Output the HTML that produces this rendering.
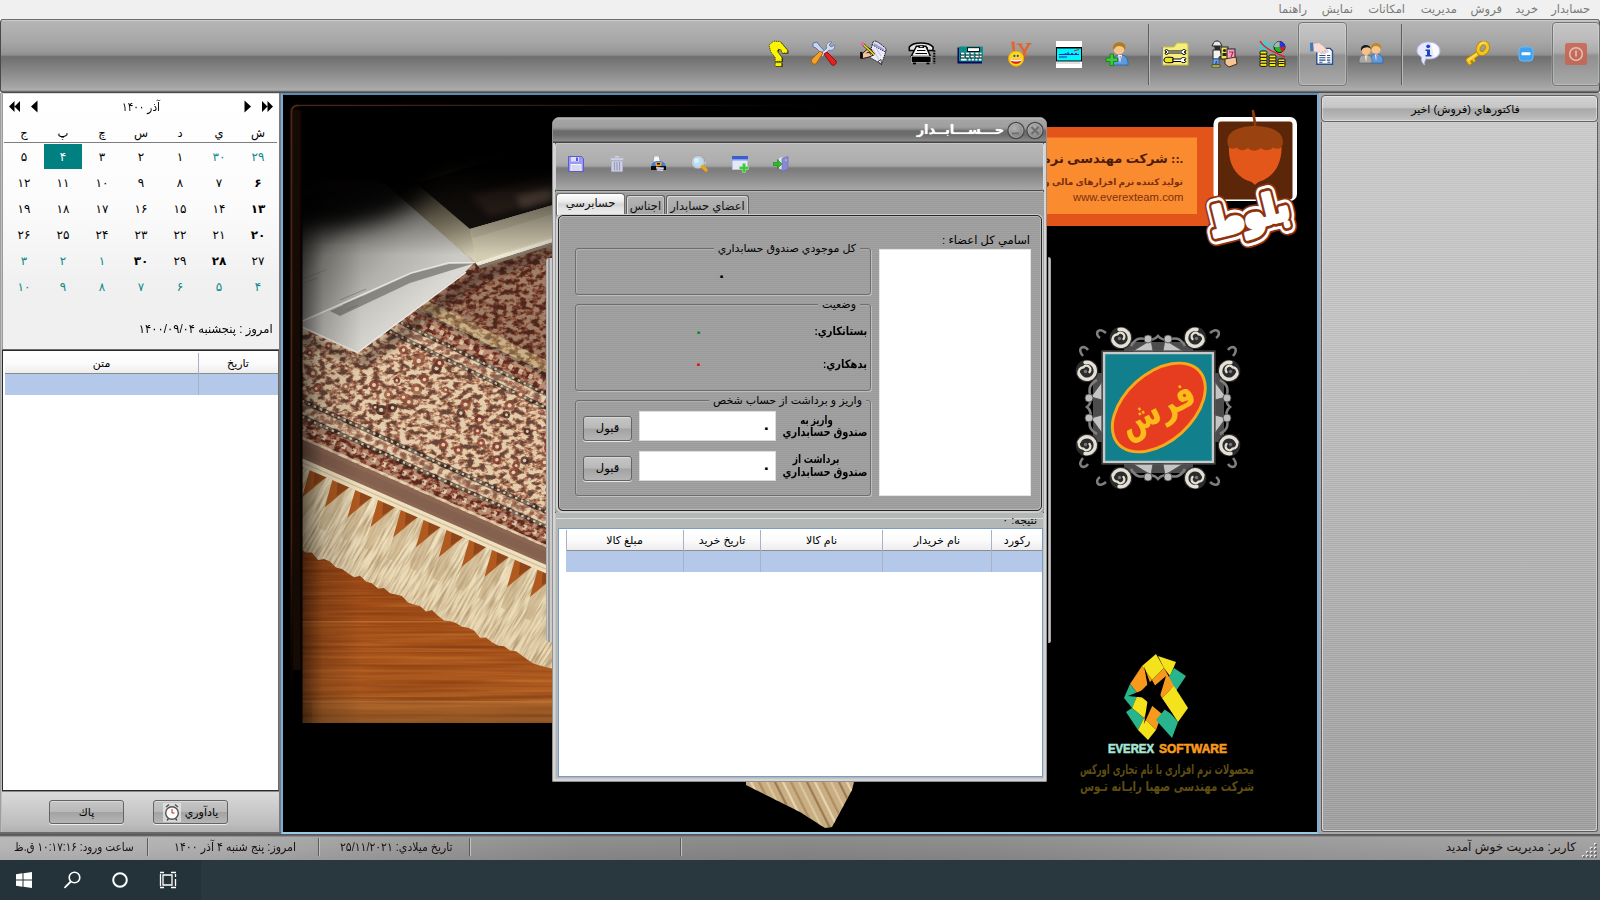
<!DOCTYPE html>
<html lang="fa">
<head>
<meta charset="utf-8">
<title>حسابدار</title>
<style>
html,body{margin:0;padding:0}
html{overflow:hidden;background:#29383f}
body{width:1600px;height:900px;position:relative;overflow:hidden;background:#f0f0f0;
 font-family:"Liberation Sans","DejaVu Sans",sans-serif;font-size:11px;color:#000;direction:rtl}
.a{position:absolute}
.t{position:absolute;white-space:nowrap;line-height:14px;height:14px}
/* menu */
#menu{left:0;top:0;width:1600px;height:19px;background:#f0f0f0}
#menu .t{color:#7b7b7b;font-size:11.5px;top:2px}
/* toolbar */
#tb{left:0;top:19px;width:1600px;height:74px;
 background:linear-gradient(to bottom,#6e6e6e 0,#6e6e6e 1px,#d6d6d6 1px,#bcbcbc 2px,#b4b4b4 3px,#b0b0b0 10px,#a7a7a7 22px,#989898 33px,#8e8e8e 36px,#737373 37.5px,#707070 39px,#7d7d7d 46px,#8d8d8d 55px,#9f9f9f 65px,#adadad 71px,#8c8c8c 72px,#4c4c4c 73px,#4c4c4c 74px);box-shadow:inset 1px 0 0 #4a4a4a, inset -1px 0 0 #4a4a4a;border-radius:4px}
.sep{position:absolute;top:5px;width:1px;height:61px;background:#5d5d5d;box-shadow:1px 0 0 #b9b9b9}
.tbtn{position:absolute;border:1px solid #767676;border-radius:4px;box-shadow:inset 0 0 0 1px rgba(255,255,255,.22), 0 0 0 1px rgba(255,255,255,.12);
 background:linear-gradient(to bottom,#c6c6c6 0,#bcbcbc 25%,#acacac 47%,#909090 53%,#989898 70%,#a9a9a9 100%)}
.ic{position:absolute}
/* left panel */
#left{left:0;top:93px;width:281px;height:741px;background:#6a6a6a}
#cal{left:2px;top:0;width:277px;height:256px;background:linear-gradient(to bottom,#ffffff 0,#fbfbfb 45%,#f0f0f0 75%,#f0f0f0 100%);border-left:1px solid #9c9c9c;border-top:1px solid #dcdcdc;box-sizing:border-box}
.d{position:absolute;width:39px;height:26px;line-height:26px;text-align:center;font-size:12px;direction:rtl}
.h{position:absolute;width:39px;height:16px;line-height:16px;text-align:center;font-size:11.5px}
.g{color:#0c8a8a}
.b{font-weight:bold}
/* grids */
.grid{position:absolute;background:#fff;box-sizing:border-box}
.gh{position:absolute;background:linear-gradient(to bottom,#ffffff 0,#fbfbfb 50%,#ededed 100%);border-bottom:1px solid #8c8c8c;box-sizing:border-box}
.gh .t{font-size:11px}
.sel{position:absolute;background:#b4c8ea}
.vl{position:absolute;width:1px;background:#a9b2c2}
.btn{position:absolute;box-sizing:border-box;border:1px solid #646464;border-radius:3px;text-align:center;font-size:11px;
 background:linear-gradient(to bottom,#c6c6c6 0,#b9b9b9 48%,#a3a3a3 52%,#b5b5b5 100%);box-shadow:inset 0 1px 0 rgba(255,255,255,.35), 0 1px 0 rgba(255,255,255,.75)}
/* status */
#status{left:0;top:834px;width:1600px;height:26px;background:linear-gradient(to bottom,#555 0,#5a5a5a 1px,#707070 2px,rgba(255,255,255,.05) 3px,rgba(0,0,0,0) 12px,rgba(0,0,0,.06) 26px),linear-gradient(to right,#b6b6b6 0,#b0b0b0 12%,#9c9c9c 24%,#8b8b8b 36%,#878787 50%,#8b8b8b 62%,#989898 78%,#a2a2a2 100%)}
#status .t{font-size:12px;top:6px;color:#1a1010}
#status .sp{position:absolute;top:4px;width:1px;height:18px;background:#5c5c5c;box-shadow:1px 0 0 #c0c0c0}
#task{left:0;top:860px;width:1600px;height:40px;background:#29383f}
/* right panel */
#right{left:1319px;top:93px;width:281px;height:741px;background:#a8a8a8}
/* mdi */
#mdi{left:281px;top:93px;width:1038px;height:741px;background:#000;box-sizing:border-box;border:2px solid #79addb;border-top-color:#5d8cb5;border-bottom-color:#9ccbea}
/* dialog */
#dlg{left:552px;top:117px;width:495px;height:665px;box-sizing:border-box}
.stripe{background-image:repeating-linear-gradient(to bottom,#a3a3a3 0,#a3a3a3 1px,#9a9a9a 1px,#9a9a9a 2px)}
.gb{position:absolute;box-sizing:border-box;border:1px solid #6e6e6e;border-radius:3px;box-shadow:1px 1px 0 rgba(255,255,255,.35), inset 1px 1px 0 rgba(255,255,255,.2)}
.gbl{position:absolute;white-space:nowrap;font-size:11px;line-height:13px;padding:0 4px}
</style>
</head>
<body>
<!--MENU-->
<div id="menu" class="a">
<span class="t" style="right:10px">حسابدار</span>
<span class="t" style="right:62px">خريد</span>
<span class="t" style="right:98px">فروش</span>
<span class="t" style="right:143px">مديريت</span>
<span class="t" style="right:195px">امكانات</span>
<span class="t" style="right:247px">نمايش</span>
<span class="t" style="right:293px">راهنما</span>
</div>
<!--TOOLBAR-->
<div id="tb" class="a">
<!--TBICONS-S-->
<div class="sep" style="left:1148px"></div>
<div class="sep" style="left:1401px"></div>
<div class="tbtn" style="left:1298px;top:3px;width:47px;height:62px"></div>
<div class="tbtn" style="left:1552px;top:3px;width:46px;height:62px"></div>
<!-- 1 question -->
<svg class="ic" style="left:768px;top:21px" width="22" height="28" viewBox="0 0 22 28">
<path d="M1 5.100 L5.500 1.200 L12.200 1.500 L19.600 10.200 L19.600 13 L13.400 13 L13.400 10.200 L10.600 9.100 L9.400 11.300 L13.900 17.500 L13.900 21.400 L7.200 21.400 L7.200 17.500 L2.700 11.900 Z M7.200 22.600 L13.700 22.600 L13.700 26.500 L7.200 26.500 Z" fill="#1a1a00" transform="translate(.8 .6)"/>
<path d="M1 5.100 L5.500 1.200 L12.200 1.500 L19.600 10.200 L19.600 13 L13.400 13 L13.400 10.200 L10.600 9.100 L9.400 11.300 L13.900 17.500 L13.900 21.400 L7.200 21.400 L7.200 17.500 L2.700 11.900 Z M7.200 22.600 L13.700 22.600 L13.700 26.500 L7.200 26.500 Z" fill="#fbf404" stroke="#2a2a00" stroke-width=".7" stroke-dasharray="1.400 .7"/>
</svg>
<!-- 2 tools -->
<svg class="ic" style="left:810px;top:22px" width="28" height="26" viewBox="0 0 28 26">
<path d="M3 2 L7 1 L9 4 L17 13 L14 15 L6 7 L3 6 Z" fill="#c9d6ee" stroke="#5b73a8" stroke-width="1"/>
<path d="M25 4 C25 9 21 10 19 9 L12 16 L10 13 L17 7 C15 4 18 0 22 1 L19 4 L21 6 Z" fill="#d5dcef" stroke="#6a7fb0" stroke-width="1"/>
<path d="M14 13 L17 11 L26 20 C27 23 24 25 22 24 Z" fill="#e32222" stroke="#8e1010" stroke-width="1"/>
<path d="M13 12 L10 10 L2 18 C0 21 3 24 6 23 Z" fill="#f0a22a" stroke="#a85c0a" stroke-width="1"/>
</svg>
<!-- 3 hand writing -->
<svg class="ic" style="left:859px;top:21px" width="28" height="27" viewBox="0 0 28 27">
<path d="M13.500 3.400 L27 11.300 L22.500 24.200 L10.100 16.900 Z" fill="#ececfa" stroke="#1a1a1a" stroke-width="1" stroke-dasharray="1.600 .8"/>
<path d="M14 2 C15.500 0 18 0.500 27.200 8.800 L26.500 12 L13.300 4.800 Z" fill="#dcdcf6" stroke="#1a1a1a" stroke-width="1" stroke-dasharray="1.600 .8"/>
<path d="M15 4 L25 10" stroke="#9a9adc" stroke-width="1.600"/>
<path d="M19 21.500 L22.500 24.600 L22 19.500 Z" fill="#f8f8ff" stroke="#1a1a1a" stroke-width=".8"/>
<path d="M14 9 L20 20 M17 8 L22 16" stroke="#c6c6ee" stroke-width="1.200"/>
<path d="M3.400 13.600 L9.600 8 L12.500 9.500 L14.800 15 L10 17 L3.400 18.600 Z" fill="#f4c49c" stroke="#1a1a1a" stroke-width="1"/>
<rect x="1.100" y="11.900" width="2.400" height="6.800" fill="#0a0a0a"/>
<path d="M3.500 3.800 L15.200 14.700" stroke="#3a3000" stroke-width="2.600"/>
<path d="M3.500 3.800 L15.200 14.700" stroke="#f4e21a" stroke-width="1.500"/>
<circle cx="3.400" cy="3.700" r="1.700" fill="#f060c0"/>
<path d="M7.500 13 L10.500 12 L11.500 14.500" stroke="#1a1a1a" stroke-width="1" fill="none"/>
</svg>
<!-- 4 phone -->
<svg class="ic" style="left:908px;top:23px" width="28" height="24" viewBox="0 0 28 24">
<path d="M1.300 8.500 L1.300 5 C5 -0.500 21 -0.500 25 5 L25 8.500 L19 8.500 L19 5.800 L8 5.800 L8 8.500 Z" fill="#e4e4e4" stroke="#000" stroke-width="1.500"/>
<path d="M8.400 4.200 L17.900 4.200 L22.400 14.400 L3.300 14.400 Z" fill="#f6f6f6" stroke="#000" stroke-width="1.400"/>
<path d="M9 8.500 L17.500 8.500 M7.500 11.500 L19 11.500" stroke="#000" stroke-width="1"/>
<rect x="10.500" y="3.400" width="5.500" height="2.600" fill="#000"/><rect x="11.800" y="4.200" width="2.800" height="1" fill="#fff"/>
<rect x="3.300" y="14.400" width="19.700" height="6.200" fill="#000" stroke="#fff" stroke-width=".5"/>
<rect x="5" y="20.600" width="3" height="1.700" fill="#000"/><rect x="18.500" y="20.600" width="3" height="1.700" fill="#000"/>
<path d="M26.300 8.200 L26.300 21.700" stroke="#000" stroke-width="2" stroke-dasharray="1.600 1"/>
</svg>
<!-- 5 calculator -->
<svg class="ic" style="left:957px;top:26px" width="27" height="19" viewBox="0 0 27 19">
<rect x="0.500" y="2.500" width="24.500" height="16" fill="#06065e"/>
<rect x="2" y="1.500" width="24" height="15" rx="1" fill="#0d8c8c"/>
<rect x="10.500" y="2.700" width="12" height="3.800" fill="#fff" stroke="#000" stroke-width=".9"/>
<g fill="#000"><rect x="3.500" y="8.300" width="3.600" height="2.200"/><rect x="8.300" y="8.300" width="3.600" height="2.200"/><rect x="13.100" y="8.300" width="3.600" height="2.200"/><rect x="17.900" y="8.300" width="3.600" height="2.200"/><rect x="22.300" y="8.300" width="2.400" height="2.200"/>
<rect x="3.500" y="11.300" width="3.600" height="2.200"/><rect x="8.300" y="11.300" width="3.600" height="2.200"/><rect x="13.100" y="11.300" width="3.600" height="2.200"/><rect x="17.900" y="11.300" width="3.600" height="2.200"/><rect x="22.300" y="11.300" width="2.400" height="2.200"/></g>
<g fill="#fff"><rect x="4" y="7.700" width="3.200" height="1.800"/><rect x="8.800" y="7.700" width="3.200" height="1.800"/><rect x="13.600" y="7.700" width="3.200" height="1.800"/><rect x="18.400" y="7.700" width="3.200" height="1.800"/><rect x="22.600" y="7.700" width="2" height="1.800"/>
<rect x="4" y="10.700" width="3.200" height="1.800"/><rect x="8.800" y="10.700" width="3.200" height="1.800"/><rect x="13.600" y="10.700" width="3.200" height="1.800"/><rect x="18.400" y="10.700" width="3.200" height="1.800"/><rect x="22.600" y="10.700" width="2" height="1.800"/>
<rect x="4" y="13.700" width="5.600" height="1.800"/><rect x="11.500" y="13.700" width="2" height="1.800"/><rect x="14.800" y="13.700" width="2" height="1.800"/><rect x="18.400" y="13.700" width="2" height="1.800"/><rect x="22" y="13.700" width="2.400" height="1.800"/></g>
</svg>
<!-- 6 yahoo -->
<svg class="ic" style="left:1006px;top:21px" width="28" height="28" viewBox="0 0 28 28">
<path d="M5.300 1.700 L8.500 1.700 L9 11.500 L6.800 11.500 Z" fill="#e8602a"/>
<path d="M10.500 3.500 L16.500 3.500 L16.500 4.700 L15.300 4.700 L18.300 9.500 L21.600 4.200 L20 4.200 L20 3 L25.600 3 L25.600 4.200 L24.300 4.200 L19.800 11.200 L19.800 15 L21.500 15 L21.500 16.500 L15.200 16.500 L15.200 15 L17 15 L17 11.500 L12.500 4.700 L10.500 4.700 Z" fill="#e8602a"/>
<circle cx="10.100" cy="18.600" r="7.600" fill="#fcd818" stroke="#e8a808" stroke-width="1"/>
<circle cx="8.400" cy="15.900" r="1.100" fill="#1c4ae0"/><circle cx="11.800" cy="15.900" r="1.100" fill="#1c4ae0"/>
<path d="M4.200 18.700 C7 20 13.500 20 16 18.700 C15.500 25.500 4.700 25.500 4.200 18.700 Z" fill="#e31b12"/>
<path d="M4.200 18.700 C7 20 13.500 20 16 18.700 L15.600 20.800 C13 21.800 7 21.800 4.600 20.800 Z" fill="#fff"/>
</svg>
<!-- 7 cyan screen -->
<svg class="ic" style="left:1056px;top:22px" width="26" height="27" viewBox="0 0 26 27">
<rect x="0" y="0" width="26" height="27" fill="#fff"/>
<rect x="0" y="6" width="26" height="14.500" fill="#000"/>
<rect x="1" y="7.500" width="24" height="12" fill="#00f6ff"/>
<path d="M3 13.500 L23 13.500 M3 16 L11 16" stroke="#0b2a9a" stroke-width="1.200"/>
<path d="M9 12 L10 14 L12 11.500 L14 14 L16 12 L18 14 L20 12 L22 14" stroke="#1030c0" stroke-width="1" fill="none"/>
<path d="M18 10 L23 8.500" stroke="#e81818" stroke-width="1"/>
<rect x="0" y="21.500" width="24" height="1" fill="#c0c0c0"/>
</svg>
<!-- 8 user add -->
<svg class="ic" style="left:1105px;top:22px" width="25" height="25" viewBox="0 0 25 25">
<path d="M8 24 C8 15 12 14 15 14 C20 14 23 16 23 24 Z" fill="#5b9be0" stroke="#2a62b0" stroke-width=".8"/>
<path d="M13 14 L15 22 L17 14 Z" fill="#fff"/><path d="M14.600 15 L15 21 L15.600 15Z" fill="#e03030"/>
<circle cx="14" cy="8" r="5.500" fill="#f7c48e"/>
<path d="M8 8 C7 1 17 -1 20 4 C21 6 20 9 19.500 9 C19 6 17 5 14 5 C11 5 10 7 8.500 9Z" fill="#b07a1e"/>
<path d="M1 17 L5 17 L5 13 L8.500 13 L8.500 17 L12.500 17 L12.500 20.500 L8.500 20.500 L8.500 24.500 L5 24.500 L5 20.500 L1 20.500 Z" fill="#3fc83a" stroke="#14861a" stroke-width=".9"/>
</svg>
<!-- 9 folder tools -->
<svg class="ic" style="left:1161px;top:23px" width="28" height="24" viewBox="0 0 28 24">
<path d="M1 5 L13 5 L16 1 L26 1 L27 3 L27 23 L1 23 Z" fill="#f4ee7e" stroke="#c9c040" stroke-width="1"/>
<rect x="0.500" y="5" width="1.200" height="18" fill="#6a6ad0"/>
<path d="M4 9 C4 7 7 7 7 9 L21 9 C21 7 25 7 25 9 L23 10 L25 11 C25 13 21 13 21 11 L7 11 C7 13 4 13 4 11 L6 10 Z" fill="#fff" stroke="#000" stroke-width="1"/>
<path d="M3 18 C3 15 6 15 12 15.500 L12 20.500 C6 21 3 21 3 18 Z" fill="#f2e41a" stroke="#000" stroke-width="1"/>
<path d="M12 17 L20 17 C20 15 25 15 25 17 L23 18 L25 19.500 C25 21 20 21 20 19.500 L12 19.500Z" fill="#fff" stroke="#000" stroke-width="1"/>
</svg>
<!-- 10 worker -->
<svg class="ic" style="left:1210px;top:21px" width="28" height="28" viewBox="0 0 28 28">
<path d="M3 4 C4 0 10 0 11 4 L12 6 L2 6Z" fill="#e8e8e8" stroke="#222" stroke-width="1"/>
<path d="M4 6 L10 6 L10 10 L5 10Z" fill="#2a2a2a"/>
<path d="M3 10 L10 10 L12 16 L9 17 L9 19 L3 19 Z" fill="#f2f2f2" stroke="#222" stroke-width="1"/>
<path d="M3 19 L9 19 L9 25 L7 25 L6.500 21 L5 25 L3 25Z" fill="#6aa2e6" stroke="#2a4a8a" stroke-width=".8"/>
<rect x="2" y="25" width="8" height="2" fill="#f2e41a" stroke="#222" stroke-width=".6"/>
<rect x="11" y="7" width="7" height="12" fill="#f6e24a" stroke="#222" stroke-width="1"/>
<circle cx="14.500" cy="10.500" r="1.600" fill="#222"/><rect x="12.500" y="13" width="4" height="3" fill="#222"/>
<rect x="17" y="9" width="8" height="12" fill="#f4a6c6" stroke="#222" stroke-width="1"/>
<path d="M19 12 L23 12 L21 17" stroke="#c01a6a" stroke-width="1.200" fill="none"/>
<path d="M15 19 L26 17 L27 24 L19 27 L15 24Z" fill="#f2c69a" stroke="#4a2a10" stroke-width="1"/>
</svg>
<!-- 11 coins chart -->
<svg class="ic" style="left:1259px;top:21px" width="28" height="27" viewBox="0 0 28 27">
<path d="M2 1 L2 12 M2 4 L16 4 M6 1 L6 12 M2 8 L16 8" stroke="#00e8f0" stroke-width="1.200" fill="none"/>
<path d="M1 1 C5 8 14 12 26 17" stroke="#f01818" stroke-width="1.400" fill="none"/>
<circle cx="20.500" cy="7" r="5.500" fill="#18b828" stroke="#111" stroke-width="1"/>
<path d="M20.500 7 L20.500 1.500 A5.500 5.500 0 0 1 26 7 Z" fill="#2038e8"/>
<path d="M20.500 7 L26 7 A5.500 5.500 0 0 1 23 12 Z" fill="#e01818"/>
<path d="M20.500 7 L20.500 1.500 A5.500 5.500 0 0 0 15 7 Z" fill="#b0b0b0"/>
<g fill="#f4e61a" stroke="#111" stroke-width="1">
<rect x="1" y="11" width="7" height="3.200" rx="1.200"/><rect x="1" y="14.200" width="7" height="3.200" rx="1.200"/><rect x="1" y="17.400" width="7" height="3.200" rx="1.200"/><rect x="1" y="20.600" width="7" height="3.200" rx="1.200"/><rect x="1" y="23.200" width="7" height="3.200" rx="1.200"/>
<rect x="10" y="15" width="7" height="3.200" rx="1.200"/><rect x="10" y="18" width="7" height="3.200" rx="1.200"/><rect x="10" y="21" width="7" height="3.200" rx="1.200"/><rect x="10" y="23.500" width="7" height="3.200" rx="1.200"/>
<rect x="19" y="19" width="7" height="3.200" rx="1.200"/><rect x="19" y="21.500" width="7" height="3.200" rx="1.200"/><rect x="19" y="23.500" width="7" height="3.200" rx="1.200"/>
</g>
</svg>
<!-- 12 hand + doc -->
<svg class="ic" style="left:1309px;top:22px" width="25" height="25" viewBox="0 0 25 25">
<path d="M7.800 7.400 L21 7.400 L23.500 9.800 L23.500 23.200 L7.800 23.200 Z" fill="#fbfcfe" stroke="#2a5090" stroke-width="1.400"/>
<path d="M10.300 14.500 L16.500 14.500 M18 14.500 L21.300 14.500 M10.300 16.800 L16.500 16.800 M18 16.800 L21.300 16.800 M10.300 19.100 L16.500 19.100 M18 19.100 L21.300 19.100 M10.300 21.300 L13.500 21.300 M18.500 21.300 L21.300 21.300" stroke="#2a4a88" stroke-width="1.100"/>
<path d="M4 2.500 L10 1.700 L14.500 5 L19.500 10.500 L18.300 11.500 L15.500 9 L17 12 L15.500 12.500 L13.300 10 L14 12.800 L12.300 13 L10.500 10.300 L8.500 11.300 L4.500 10.500 Z" fill="#f8dcd6" stroke="#c9a0a0" stroke-width=".6"/>
<path d="M1 1.800 L4 1.500 L4.500 10.300 L1.300 10.500Z" fill="#3a7ab8"/>
</svg>
<!-- 13 two users -->
<svg class="ic" style="left:1358px;top:23px" width="26" height="22" viewBox="0 0 26 22">
<path d="M12 21 C12 14 14 12 18 12 C23 12 25 14 25 21 Z" fill="#5b9be0" stroke="#2a62b0" stroke-width=".7"/>
<path d="M17 12.500 L18 19 L19.500 12.500Z" fill="#fff"/><path d="M18 13 L18.200 18 L18.800 13Z" fill="#e03030"/>
<circle cx="18" cy="7" r="4.800" fill="#f7c48e"/>
<path d="M13 7 C12 0 22 -1 23.500 5 C23.500 7 23 8 23 8 C22 5 20 4 18 4 C15 4 14 6 13.500 8Z" fill="#c08a28"/>
<path d="M1 21 C1 14 3 13 8 13 C13 13 14 15 14 21 Z" fill="#a8a8a8" stroke="#6a6a6a" stroke-width=".7"/>
<path d="M7 13.500 L8 20 L9.500 13.500Z" fill="#fff"/><path d="M8 14 L8.200 19 L8.800 14Z" fill="#f0c020"/>
<circle cx="8" cy="8.500" r="4.600" fill="#f7c08a"/>
<path d="M3 8 C2 2 12 1 13 7 C12 6 10 5 8 5.500 C6 5.500 4 6.500 3.500 9Z" fill="#1a1a1a"/>
</svg>
<!-- 14 info bubble -->
<svg class="ic" style="left:1416px;top:22px" width="25" height="25" viewBox="0 0 25 25">
<path d="M12.500 1 C20 1 24 5 24 10 C24 15 19 18 13 18 C12 18 11 18 10 17.800 C9 20 8 22 8.500 24 C6 22 5 19 5.500 16 C2 14 1 12 1 10 C1 5 5 1 12.500 1Z" fill="#e8e8fb" stroke="#b6b6e6" stroke-width="1"/>
<path d="M15 2 C20 3 23 6 23 10 C23 13 21 15 18 16.500 C17 10 16 6 15 2Z" fill="#fafaff"/>
<circle cx="12.200" cy="5.300" r="1.900" fill="#1a44c0"/>
<path d="M9.500 8.500 L14 8.500 L14 14 L15.500 14 L15.500 15.500 L9.500 15.500 L9.500 14 L11 14 L11 10 L9.500 10Z" fill="#1a44c0"/>
</svg>
<!-- 15 key -->
<svg class="ic" style="left:1465px;top:22px" width="25" height="25" viewBox="0 0 25 25">
<path d="M13.500 9.500 L16.500 12.800 L9.500 17.500 L10.800 20 L8.300 21.500 L7.200 19.300 L5.800 20.200 L7 22.800 L4 24.300 L1 19.800 L1.200 17.800 Z" fill="#f4c620" stroke="#b8860a" stroke-width="1"/>
<path d="M3 19.500 L13.500 11.500" stroke="#fbe27a" stroke-width="1.200"/>
<ellipse cx="17.800" cy="7.200" rx="4.400" ry="5.600" transform="rotate(28 17.800 7.200)" fill="none" stroke="#b8860a" stroke-width="4.800"/>
<ellipse cx="17.800" cy="7.200" rx="4.400" ry="5.600" transform="rotate(28 17.800 7.200)" fill="none" stroke="#f4c620" stroke-width="3.200"/>
<path d="M14.500 4.500 C16 1.500 19 1 21 2.500" stroke="#fbe27a" stroke-width="1.200" fill="none"/>
</svg>
<!-- 16 blue minus -->
<svg class="ic" style="left:1518px;top:27px" width="16" height="16" viewBox="0 0 16 16">
<rect x="1" y="1" width="14" height="14" rx="3.500" fill="#3ea2f2" stroke="#6cbcf8" stroke-width="1"/>
<rect x="3.500" y="6.300" width="9" height="3" rx=".8" fill="#fff"/>
</svg>
<!-- 17 power -->
<svg class="ic" style="left:1565px;top:24px" width="22" height="22" viewBox="0 0 22 22">
<rect x="0" y="0" width="22" height="22" rx="2.500" fill="#c9634f" fill-opacity=".85"/>
<circle cx="11" cy="11" r="6.300" fill="none" stroke="#e6c0b8" stroke-width="1.500"/>
<rect x="10.200" y="7.500" width="1.600" height="6" fill="#e6c0b8"/>
</svg>
<!--TBICONS-E-->
</div>
<!--LEFT-->
<div id="left" class="a">
<!--CAL-S-->
<div id="cal" class="a"></div>
<svg class="a" style="left:0;top:0" width="281" height="30" viewBox="0 0 281 30"><path d="M9 13.500 L14.500 8 L14.500 19 Z M14.500 13.500 L20 8 L20 19 Z M31 13.500 L37.500 7.500 L37.500 19.500 Z M251 13.500 L244.500 7.500 L244.500 19.500 Z M273 13.500 L267.500 8 L267.500 19 Z M267.500 13.500 L262 8 L262 19 Z" fill="#000"/></svg>
<span class="t" style="left:91px;width:100px;text-align:center;top:7px;font-size:12px;transform:scaleX(.87)">آذر ۱۴۰۰</span>
<span class="h a" style="left:238.5px;top:32px">ش</span>
<span class="h a" style="left:199.5px;top:32px">ي</span>
<span class="h a" style="left:160.5px;top:32px">د</span>
<span class="h a" style="left:121.5px;top:32px">س</span>
<span class="h a" style="left:82.5px;top:32px">چ</span>
<span class="h a" style="left:43.5px;top:32px">پ</span>
<span class="h a" style="left:4.5px;top:32px">ج</span>
<div class="a" style="left:4px;top:49px;width:273px;height:1px;background:#7d7d7d"></div>
<span class="d g" style="left:238.5px;top:51px">۲۹</span>
<span class="d g" style="left:199.5px;top:51px">۳۰</span>
<span class="d" style="left:160.5px;top:51px">۱</span>
<span class="d" style="left:121.5px;top:51px">۲</span>
<span class="d" style="left:82.5px;top:51px">۳</span>
<div class="a" style="left:44px;top:51px;width:38px;height:25px;background:#008080"></div>
<span class="d" style="left:43.5px;top:51px;color:#fff">۴</span>
<span class="d" style="left:4.5px;top:51px">۵</span>
<span class="d b" style="left:238.5px;top:77px">۶</span>
<span class="d" style="left:199.5px;top:77px">۷</span>
<span class="d" style="left:160.5px;top:77px">۸</span>
<span class="d" style="left:121.5px;top:77px">۹</span>
<span class="d" style="left:82.5px;top:77px">۱۰</span>
<span class="d" style="left:43.5px;top:77px">۱۱</span>
<span class="d" style="left:4.5px;top:77px">۱۲</span>
<span class="d b" style="left:238.5px;top:103px">۱۳</span>
<span class="d" style="left:199.5px;top:103px">۱۴</span>
<span class="d" style="left:160.5px;top:103px">۱۵</span>
<span class="d" style="left:121.5px;top:103px">۱۶</span>
<span class="d" style="left:82.5px;top:103px">۱۷</span>
<span class="d" style="left:43.5px;top:103px">۱۸</span>
<span class="d" style="left:4.5px;top:103px">۱۹</span>
<span class="d b" style="left:238.5px;top:129px">۲۰</span>
<span class="d" style="left:199.5px;top:129px">۲۱</span>
<span class="d" style="left:160.5px;top:129px">۲۲</span>
<span class="d" style="left:121.5px;top:129px">۲۳</span>
<span class="d" style="left:82.5px;top:129px">۲۴</span>
<span class="d" style="left:43.5px;top:129px">۲۵</span>
<span class="d" style="left:4.5px;top:129px">۲۶</span>
<span class="d" style="left:238.5px;top:155px">۲۷</span>
<span class="d b" style="left:199.5px;top:155px">۲۸</span>
<span class="d" style="left:160.5px;top:155px">۲۹</span>
<span class="d b" style="left:121.5px;top:155px">۳۰</span>
<span class="d g" style="left:82.5px;top:155px">۱</span>
<span class="d g" style="left:43.5px;top:155px">۲</span>
<span class="d g" style="left:4.5px;top:155px">۳</span>
<span class="d g" style="left:238.5px;top:181px">۴</span>
<span class="d g" style="left:199.5px;top:181px">۵</span>
<span class="d g" style="left:160.5px;top:181px">۶</span>
<span class="d g" style="left:121.5px;top:181px">۷</span>
<span class="d g" style="left:82.5px;top:181px">۸</span>
<span class="d g" style="left:43.5px;top:181px">۹</span>
<span class="d g" style="left:4.5px;top:181px">۱۰</span>
<span class="t" style="right:8px;top:229px;font-size:12px;transform-origin:right;transform:scaleX(.965)">امروز :  پنجشنبه ۱۴۰۰/۰۹/۰۴</span>
<!--CAL-E-->
<!--REM-S-->
<div class="grid" style="left:2px;top:257px;width:277px;height:441px;border:1px solid #2a2a2a;border-right-color:#6a6a6a"></div>
<div class="gh" style="left:5px;top:260px;width:273px;height:21px"><span class="t" style="left:193px;width:80px;text-align:center;top:3px">تاريخ</span><span class="t" style="left:0;width:193px;text-align:center;top:3px">متن</span></div>
<div class="sel" style="left:5px;top:281px;width:273px;height:21px"></div>
<div class="vl" style="left:198px;top:260px;height:42px"></div>
<div class="a" style="left:0;top:698px;width:281px;height:41px;background:linear-gradient(to bottom,#dadada 0,#cfcfcf 30%,#bdbdbd 80%,#b0b0b0 100%);border-top:1px solid #8a8a8a;box-sizing:border-box"></div>
<div class="btn" style="left:49px;top:707px;width:75px;height:24px;line-height:22px">پاك</div>
<div class="btn" style="left:153px;top:707px;width:75px;height:24px;line-height:22px;padding-left:22px;text-align:center">يادآوري
<svg class="a" style="left:9px;top:2px" width="18" height="19" viewBox="0 0 18 19"><rect x="0" y="0" width="18" height="19" fill="#e9e9e9" fill-opacity=".7"/><circle cx="9" cy="10" r="6.300" fill="#fdfdfd" stroke="#555" stroke-width="1.400"/><path d="M3 4 L6 1.500 M15 4 L12 1.500 M4 17.500 L5.500 15.500 M14 17.500 L12.500 15.500" stroke="#555" stroke-width="1.500"/><path d="M9 6 L9 10 L11.500 10" stroke="#d02020" stroke-width="1" fill="none"/></svg>
</div>
<div class="a" style="left:279px;top:0;width:2px;height:739px;background:#7b7b7b"></div>
<div class="a" style="left:0;top:0;width:2px;height:739px;background:linear-gradient(to right,#8e8e8e,#cfcfcf)"></div>
<!--REM-E-->
</div>
<!--MDI-->
<div id="mdi" class="a">
<!--MDI-S-->
<svg class="a" style="left:0;top:0" width="1034" height="735" viewBox="283 95 1034 735">
<defs>
<filter id="fc" x="0" y="0" width="100%" height="100%" color-interpolation-filters="sRGB">
<feTurbulence type="fractalNoise" baseFrequency="0.15 0.2" numOctaves="3" seed="11" result="n"/>
<feColorMatrix in="n" type="matrix" values="2.8 0 0 0 -0.9  2.8 0 0 0 -0.9  2.8 0 0 0 -0.9  0 0 0 0 1"/>
<feComponentTransfer>
<feFuncR type="table" tableValues="0.24 0.50 0.70 0.86 0.89"/>
<feFuncG type="table" tableValues="0.13 0.24 0.46 0.77 0.81"/>
<feFuncB type="table" tableValues="0.10 0.17 0.34 0.63 0.68"/>
</feComponentTransfer>
</filter>
<filter id="fw" x="0" y="0" width="100%" height="100%" color-interpolation-filters="sRGB">
<feTurbulence type="fractalNoise" baseFrequency="0.008 0.3" numOctaves="2" seed="3" result="n"/>
<feColorMatrix in="n" type="matrix" values="0 0 0 0 0.86  0 0 0 0 0.55  0 0 0 0 0.25  2.2 0 0 0 -0.85" result="c"/><feComposite in="c" in2="SourceGraphic" operator="in"/>
</filter>
<filter id="fw2" x="0" y="0" width="100%" height="100%" color-interpolation-filters="sRGB">
<feTurbulence type="fractalNoise" baseFrequency="0.006 0.22" numOctaves="2" seed="9" result="n"/>
<feColorMatrix in="n" type="matrix" values="0 0 0 0 0.45  0 0 0 0 0.18  0 0 0 0 0.04  2.2 0 0 0 -0.9" result="c"/><feComposite in="c" in2="SourceGraphic" operator="in"/>
</filter>
<filter id="ffr" x="-5%" y="-5%" width="110%" height="110%" color-interpolation-filters="sRGB">
<feTurbulence type="fractalNoise" baseFrequency="0.5 0.04" numOctaves="2" seed="5" result="n"/>
<feColorMatrix in="n" type="matrix" values="0 0 0 0 0.55  0 0 0 0 0.42  0 0 0 0 0.25  2.4 0 0 0 -0.95" result="c"/>
<feComposite in="c" in2="SourceGraphic" operator="in"/>
</filter>
<filter id="bl1"><feGaussianBlur stdDeviation="0.7"/></filter>
<filter id="bl3"><feGaussianBlur stdDeviation="3"/></filter>
<filter id="bl8"><feGaussianBlur stdDeviation="10"/></filter>
<linearGradient id="gtop" x1="0" y1="0" x2="0" y2="1"><stop offset="0" stop-color="#000" stop-opacity="1"/><stop offset=".3" stop-color="#000" stop-opacity=".97"/><stop offset="1" stop-color="#000" stop-opacity="0"/></linearGradient>
<linearGradient id="gwood" x1="0" y1="540" x2="0" y2="723" gradientUnits="userSpaceOnUse"><stop offset="0" stop-color="#8f3f12"/><stop offset=".45" stop-color="#a34e18"/><stop offset=".8" stop-color="#ad591e"/><stop offset="1" stop-color="#b96a28"/></linearGradient>
<linearGradient id="gpageL" x1="315" y1="205" x2="420" y2="300" gradientUnits="userSpaceOnUse"><stop offset="0" stop-color="#363431"/><stop offset=".3" stop-color="#878580"/><stop offset=".65" stop-color="#b3b1ab"/><stop offset="1" stop-color="#cdcbc5"/></linearGradient>
<linearGradient id="gpageL2" x1="330" y1="290" x2="380" y2="345" gradientUnits="userSpaceOnUse"><stop offset="0" stop-color="#b4b2ad"/><stop offset="1" stop-color="#dcdad4"/></linearGradient>
<linearGradient id="gpageR" x1="400" y1="180" x2="470" y2="262" gradientUnits="userSpaceOnUse"><stop offset="0" stop-color="#1a1612"/><stop offset=".45" stop-color="#8a8068"/><stop offset="1" stop-color="#d8d0b6"/></linearGradient>
<linearGradient id="gframe" x1="291" y1="0" x2="850" y2="0" gradientUnits="userSpaceOnUse"><stop offset="0" stop-color="#4e2611"/><stop offset=".4" stop-color="#3c1c0c"/><stop offset="1" stop-color="#1a0a04" stop-opacity="0"/></linearGradient>
<linearGradient id="gframe2" x1="0" y1="105" x2="0" y2="720" gradientUnits="userSpaceOnUse"><stop offset="0" stop-color="#4e2611"/><stop offset=".7" stop-color="#44200d"/><stop offset="1" stop-color="#1a0a04" stop-opacity="0"/></linearGradient>
<linearGradient id="gfr" x1="0" y1="0" x2="-.45" y2="1"><stop offset="0" stop-color="#f1e3c2"/><stop offset=".6" stop-color="#e6d3ae"/><stop offset="1" stop-color="#dcc79f"/></linearGradient>
<linearGradient id="gvl" x1="0" y1="0" x2="1" y2="0"><stop offset="0" stop-color="#000" stop-opacity=".55"/><stop offset=".35" stop-color="#000" stop-opacity=".18"/><stop offset="1" stop-color="#000" stop-opacity="0"/></linearGradient>
<linearGradient id="gvb" x1="0" y1="0" x2="0" y2="1"><stop offset="0" stop-color="#000" stop-opacity="0"/><stop offset="1" stop-color="#000" stop-opacity=".25"/></linearGradient>
<clipPath id="cpic"><rect x="302" y="106" width="742" height="617"/></clipPath>
<clipPath id="ccarpet"><path d="M302 300 L420 240 L560 200 L1060 200 L1060 800 L552 568 L302 459 Z"/></clipPath>
</defs>
<rect x="283" y="95" width="1034" height="735" fill="#000"/>
<path d="M297 105.500 L860 105.500" stroke="url(#gframe)" stroke-width="1.600" fill="none"/>
<path d="M291.500 720 L291.500 112 Q291.500 105.500 298 105.500" stroke="url(#gframe2)" stroke-width="2" fill="none"/>
<rect x="293" y="110" width="9" height="560" fill="#1c0d05" opacity=".8"/>
<g clip-path="url(#cpic)">
<rect x="302" y="180" width="760" height="545" fill="#9a6e55"/>
<rect x="302" y="180" width="760" height="545" filter="url(#fc)" clip-path="url(#ccarpet)"/>
<path d="M302.0 459.3 L1060.0 790.3 L1060.0 774.9 L302.0 439.3 Z" fill="#8b6653" opacity="1"/>
<path d="M302.0 454.3 L1060.0 786.5 L1060.0 778.7 L302.0 444.3 Z" fill="#7d5a49" opacity="0.5"/>
<path d="M302.0 439.3 L1060.0 774.9 L1060.0 772.5 L302.0 436.3 Z" fill="#e6d2b2" opacity="0.8"/>
<path d="M302.0 436.3 L1060.0 772.5 L1060.0 759.4 L302.0 419.3 Z" fill="#7a3a2a" opacity="0.42"/>
<path d="M302.0 419.3 L1060.0 759.4 L1060.0 755.6 L302.0 414.3 Z" fill="#35302c" opacity="0.62"/>
<path d="M302.0 414.3 L1060.0 755.6 L1060.0 747.1 L302.0 403.3 Z" fill="#e8d6b8" opacity="0.45"/>
<path d="M302.0 403.3 L1060.0 747.1 L1060.0 743.2 L302.0 398.3 Z" fill="#35302c" opacity="0.62"/>
<path d="M302.0 398.3 L1060.0 743.2 L1060.0 660.5 L302.0 291.3 Z" fill="#ead8b8" opacity="0.22"/>
<path d="M302.0 291.3 L1060.0 660.5 L1060.0 656.7 L302.0 286.3 Z" fill="#35302c" opacity="0.6"/>
<path d="M302.0 286.3 L1060.0 656.7 L1060.0 648.9 L302.0 276.3 Z" fill="#e8d6b8" opacity="0.4"/>
<path d="M302.0 276.3 L1060.0 648.9 L1060.0 645.1 L302.0 271.3 Z" fill="#35302c" opacity="0.6"/>
<path d="M302.0 271.3 L1060.0 645.1 L1060.0 632.7 L302.0 255.3 Z" fill="#7a3a2a" opacity="0.42"/>
<path d="M302.0 255.3 L1060.0 632.7 L1060.0 629.6 L302.0 251.3 Z" fill="#35302c" opacity="0.5"/>
<path d="M302.0 251.3 L1060.0 629.6 L1060.0 618.8 L302.0 237.3 Z" fill="#b09a6c" opacity="0.55"/>
<path d="M302.0 237.3 L1060.0 618.8 L1060.0 449.6 L302.0 18.3 Z" fill="#5a3024" opacity="0.5"/>
<path d="M302 416.8 L1060 757.5" stroke="#e8d8bc" stroke-width="2.2" stroke-dasharray="2.5 4" opacity="0.85" fill="none"/>
<path d="M302 400.8 L1060 745.1" stroke="#e8d8bc" stroke-width="2.2" stroke-dasharray="2.5 4" opacity="0.85" fill="none"/>
<path d="M302 288.8 L1060 658.6" stroke="#e8d8bc" stroke-width="2.2" stroke-dasharray="2.5 4" opacity="0.8" fill="none"/>
<path d="M302 273.8 L1060 647.0" stroke="#e8d8bc" stroke-width="2.2" stroke-dasharray="2.5 4" opacity="0.8" fill="none"/>
<path d="M302 427.8 L1060 766.0" stroke="#ecdcc0" stroke-width="5" stroke-dasharray="4 7" opacity="0.75" fill="none"/>
<path d="M302 427.8 L1060 766.0" stroke="#6a2a20" stroke-width="2" stroke-dasharray="1.5 9.5" opacity="0.8" fill="none"/>
<path d="M302 408.8 L1060 751.3" stroke="#8a4030" stroke-width="5" stroke-dasharray="4 6" opacity="0.55" fill="none"/>
<path d="M302 281.3 L1060 652.8" stroke="#8a4030" stroke-width="4.5" stroke-dasharray="4 6" opacity="0.5" fill="none"/>
<path d="M302 263.3 L1060 638.9" stroke="#ecdcc0" stroke-width="5" stroke-dasharray="4 7" opacity="0.7" fill="none"/>
<circle cx="384.2" cy="410.6" r="5.0" fill="#7a3326" opacity=".8"/>
<circle cx="384.2" cy="410.6" r="2.0" fill="#ecdcc0" opacity=".9"/>
<circle cx="513.5" cy="472.3" r="4.7" fill="#8f4632" opacity=".8"/>
<circle cx="513.5" cy="472.3" r="1.9" fill="#ecdcc0" opacity=".9"/>
<circle cx="309.7" cy="352.7" r="3.2" fill="#7a3326" opacity=".8"/>
<circle cx="309.7" cy="352.7" r="1.3" fill="#ecdcc0" opacity=".9"/>
<circle cx="443.3" cy="444.7" r="4.7" fill="#8f4632" opacity=".8"/>
<circle cx="443.3" cy="444.7" r="1.9" fill="#ecdcc0" opacity=".9"/>
<circle cx="464.0" cy="406.6" r="3.2" fill="#9a5a3e" opacity=".8"/>
<circle cx="464.0" cy="406.6" r="1.3" fill="#ecdcc0" opacity=".9"/>
<circle cx="312.9" cy="373.2" r="4.7" fill="#8f4632" opacity=".8"/>
<circle cx="312.9" cy="373.2" r="1.9" fill="#ecdcc0" opacity=".9"/>
<circle cx="375.3" cy="407.3" r="3.4" fill="#4a2a22" opacity=".8"/>
<circle cx="375.3" cy="407.3" r="1.3" fill="#ecdcc0" opacity=".9"/>
<circle cx="445.7" cy="389.7" r="3.3" fill="#8f4632" opacity=".8"/>
<circle cx="445.7" cy="389.7" r="1.3" fill="#ecdcc0" opacity=".9"/>
<circle cx="396.8" cy="380.4" r="3.2" fill="#7a3326" opacity=".8"/>
<circle cx="396.8" cy="380.4" r="1.3" fill="#ecdcc0" opacity=".9"/>
<circle cx="460.9" cy="413.1" r="4.6" fill="#4a2a22" opacity=".8"/>
<circle cx="460.9" cy="413.1" r="1.8" fill="#ecdcc0" opacity=".9"/>
<circle cx="421.1" cy="357.2" r="4.1" fill="#8f4632" opacity=".8"/>
<circle cx="421.1" cy="357.2" r="1.6" fill="#ecdcc0" opacity=".9"/>
<circle cx="506.5" cy="414.8" r="3.7" fill="#4a2a22" opacity=".8"/>
<circle cx="506.5" cy="414.8" r="1.5" fill="#ecdcc0" opacity=".9"/>
<circle cx="436.6" cy="368.3" r="5.2" fill="#4a2a22" opacity=".8"/>
<circle cx="436.6" cy="368.3" r="2.1" fill="#ecdcc0" opacity=".9"/>
<circle cx="458.3" cy="450.0" r="4.5" fill="#8f4632" opacity=".8"/>
<circle cx="458.3" cy="450.0" r="1.8" fill="#ecdcc0" opacity=".9"/>
<circle cx="496.9" cy="459.8" r="4.5" fill="#7a3326" opacity=".8"/>
<circle cx="496.9" cy="459.8" r="1.8" fill="#ecdcc0" opacity=".9"/>
<circle cx="550.1" cy="489.7" r="4.7" fill="#4a2a22" opacity=".8"/>
<circle cx="550.1" cy="489.7" r="1.9" fill="#ecdcc0" opacity=".9"/>
<circle cx="388.4" cy="394.6" r="4.5" fill="#9a5a3e" opacity=".8"/>
<circle cx="388.4" cy="394.6" r="1.8" fill="#ecdcc0" opacity=".9"/>
<circle cx="317.9" cy="386.8" r="3.8" fill="#7a3326" opacity=".8"/>
<circle cx="317.9" cy="386.8" r="1.5" fill="#ecdcc0" opacity=".9"/>
<circle cx="315.8" cy="331.2" r="4.9" fill="#9a5a3e" opacity=".8"/>
<circle cx="315.8" cy="331.2" r="2.0" fill="#ecdcc0" opacity=".9"/>
<circle cx="374.0" cy="385.0" r="5.0" fill="#7a3326" opacity=".8"/>
<circle cx="374.0" cy="385.0" r="2.0" fill="#ecdcc0" opacity=".9"/>
<circle cx="544.6" cy="462.3" r="4.8" fill="#9a5a3e" opacity=".8"/>
<circle cx="544.6" cy="462.3" r="1.9" fill="#ecdcc0" opacity=".9"/>
<circle cx="315.3" cy="325.0" r="3.4" fill="#8f4632" opacity=".8"/>
<circle cx="315.3" cy="325.0" r="1.4" fill="#ecdcc0" opacity=".9"/>
<circle cx="403.5" cy="350.1" r="4.5" fill="#8f4632" opacity=".8"/>
<circle cx="403.5" cy="350.1" r="1.8" fill="#ecdcc0" opacity=".9"/>
<circle cx="416.8" cy="389.0" r="5.7" fill="#9a5a3e" opacity=".8"/>
<circle cx="416.8" cy="389.0" r="2.3" fill="#ecdcc0" opacity=".9"/>
<circle cx="524.6" cy="460.5" r="4.2" fill="#4a2a22" opacity=".8"/>
<circle cx="524.6" cy="460.5" r="1.7" fill="#ecdcc0" opacity=".9"/>
<circle cx="477.5" cy="430.8" r="3.7" fill="#7a3326" opacity=".8"/>
<circle cx="477.5" cy="430.8" r="1.5" fill="#ecdcc0" opacity=".9"/>
<circle cx="345.8" cy="386.6" r="3.7" fill="#9a5a3e" opacity=".8"/>
<circle cx="345.8" cy="386.6" r="1.5" fill="#ecdcc0" opacity=".9"/>
<circle cx="516.1" cy="465.4" r="3.8" fill="#8f4632" opacity=".8"/>
<circle cx="516.1" cy="465.4" r="1.5" fill="#ecdcc0" opacity=".9"/>
<circle cx="408.9" cy="401.8" r="4.7" fill="#8f4632" opacity=".8"/>
<circle cx="408.9" cy="401.8" r="1.9" fill="#ecdcc0" opacity=".9"/>
<circle cx="479.5" cy="419.5" r="4.9" fill="#7a3326" opacity=".8"/>
<circle cx="479.5" cy="419.5" r="1.9" fill="#ecdcc0" opacity=".9"/>
<circle cx="418.7" cy="360.9" r="5.9" fill="#9a5a3e" opacity=".8"/>
<circle cx="418.7" cy="360.9" r="2.3" fill="#ecdcc0" opacity=".9"/>
<circle cx="403.5" cy="397.2" r="4.4" fill="#9a5a3e" opacity=".8"/>
<circle cx="403.5" cy="397.2" r="1.8" fill="#ecdcc0" opacity=".9"/>
<circle cx="316.2" cy="388.4" r="3.6" fill="#8f4632" opacity=".8"/>
<circle cx="316.2" cy="388.4" r="1.5" fill="#ecdcc0" opacity=".9"/>
<circle cx="328.6" cy="345.9" r="3.3" fill="#8f4632" opacity=".8"/>
<circle cx="328.6" cy="345.9" r="1.3" fill="#ecdcc0" opacity=".9"/>
<circle cx="439.5" cy="363.0" r="4.8" fill="#7a3326" opacity=".8"/>
<circle cx="439.5" cy="363.0" r="1.9" fill="#ecdcc0" opacity=".9"/>
<circle cx="527.3" cy="431.5" r="3.4" fill="#4a2a22" opacity=".8"/>
<circle cx="527.3" cy="431.5" r="1.4" fill="#ecdcc0" opacity=".9"/>
<circle cx="548.4" cy="441.8" r="4.4" fill="#7a3326" opacity=".8"/>
<circle cx="548.4" cy="441.8" r="1.8" fill="#ecdcc0" opacity=".9"/>
<circle cx="520.7" cy="394.5" r="4.4" fill="#9a5a3e" opacity=".8"/>
<circle cx="520.7" cy="394.5" r="1.8" fill="#ecdcc0" opacity=".9"/>
<circle cx="381.1" cy="409.9" r="5.2" fill="#4a2a22" opacity=".8"/>
<circle cx="381.1" cy="409.9" r="2.1" fill="#ecdcc0" opacity=".9"/>
<circle cx="424.4" cy="379.5" r="4.5" fill="#8f4632" opacity=".8"/>
<circle cx="424.4" cy="379.5" r="1.8" fill="#ecdcc0" opacity=".9"/>
<circle cx="547.3" cy="447.9" r="3.4" fill="#7a3326" opacity=".8"/>
<circle cx="547.3" cy="447.9" r="1.4" fill="#ecdcc0" opacity=".9"/>
<circle cx="497.1" cy="446.7" r="4.9" fill="#7a3326" opacity=".8"/>
<circle cx="497.1" cy="446.7" r="2.0" fill="#ecdcc0" opacity=".9"/>
<circle cx="481.0" cy="443.0" r="4.1" fill="#8f4632" opacity=".8"/>
<circle cx="481.0" cy="443.0" r="1.6" fill="#ecdcc0" opacity=".9"/>
<circle cx="392.5" cy="407.8" r="4.6" fill="#4a2a22" opacity=".8"/>
<circle cx="392.5" cy="407.8" r="1.8" fill="#ecdcc0" opacity=".9"/>
<circle cx="465.5" cy="404.5" r="5.4" fill="#8f4632" opacity=".8"/>
<circle cx="465.5" cy="404.5" r="2.1" fill="#ecdcc0" opacity=".9"/>
<circle cx="509.6" cy="405.4" r="5.2" fill="#8f4632" opacity=".8"/>
<circle cx="509.6" cy="405.4" r="2.1" fill="#ecdcc0" opacity=".9"/>
<path d="M302 520 L552 640 L1060 800 L1060 723 L302 723 Z" fill="url(#gwood)"/>
<path d="M302 520 L552 640 L1060 800 L1060 723 L302 723 Z" filter="url(#fw)" opacity=".35"/>
<path d="M302 520 L552 640 L1060 800 L1060 723 L302 723 Z" filter="url(#fw2)" opacity=".55"/>
<rect x="302" y="598" width="300" height="1.500" fill="#8a3c10" opacity=".45"/>
<rect x="302" y="621" width="300" height="1.500" fill="#d98a45" opacity=".45"/>
<rect x="302" y="652" width="300" height="1.500" fill="#8f4012" opacity=".45"/>
<rect x="302" y="686" width="300" height="1.500" fill="#94461a" opacity=".45"/>
<rect x="302" y="701" width="300" height="1.500" fill="#dc9050" opacity=".45"/>
<rect x="312" y="702" width="250" height="21" fill="#d58642" opacity=".30"/>
<path d="M302.0 466.3 L552.0 575.5 L552.0 668.5 L546.0 667.1 L540.0 665.4 L534.0 663.8 L528.0 659.9 L522.0 655.5 L516.0 651.2 L510.0 650.4 L504.0 646.2 L498.0 645.6 L492.0 642.3 L486.0 637.6 L480.0 637.8 L474.0 630.5 L468.0 627.7 L462.0 626.7 L456.0 623.1 L450.0 621.0 L444.0 620.6 L438.0 615.8 L432.0 609.9 L426.0 611.6 L420.0 605.9 L414.0 604.5 L408.0 602.6 L402.0 596.1 L396.0 594.6 L390.0 593.3 L384.0 587.9 L378.0 588.4 L372.0 583.3 L366.0 581.4 L360.0 575.8 L354.0 577.2 L348.0 573.2 L342.0 569.0 L336.0 567.5 L330.0 561.4 L324.0 558.9 L318.0 560.1 L312.0 552.4 L306.0 552.4 L300.0 548.9 Z" fill="url(#gfr)"/>
<clipPath id="cfr"><path d="M302.0 466.3 L552.0 575.5 L552.0 668.5 L546.0 667.1 L540.0 665.4 L534.0 663.8 L528.0 659.9 L522.0 655.5 L516.0 651.2 L510.0 650.4 L504.0 646.2 L498.0 645.6 L492.0 642.3 L486.0 637.6 L480.0 637.8 L474.0 630.5 L468.0 627.7 L462.0 626.7 L456.0 623.1 L450.0 621.0 L444.0 620.6 L438.0 615.8 L432.0 609.9 L426.0 611.6 L420.0 605.9 L414.0 604.5 L408.0 602.6 L402.0 596.1 L396.0 594.6 L390.0 593.3 L384.0 587.9 L378.0 588.4 L372.0 583.3 L366.0 581.4 L360.0 575.8 L354.0 577.2 L348.0 573.2 L342.0 569.0 L336.0 567.5 L330.0 561.4 L324.0 558.9 L318.0 560.1 L312.0 552.4 L306.0 552.4 L300.0 548.9 Z"/></clipPath>
<g clip-path="url(#cfr)"><rect x="200" y="380" width="460" height="400" fill="#fff" filter="url(#ffr)" opacity=".6" transform="rotate(30 427 560)"/></g>
<path d="M287.0 459.7 L304.0 467.1 L279.0 487.6 Z" fill="#b05a20"/>
<path d="M292.0 461.9 L304.0 467.1 L291.0 475.6 Z" fill="#6e3210" opacity=".5"/>
<path d="M304.0 467.1 L280.0 511.1 L273.0 508.1 L279.0 487.6 Z" fill="#bfa57b" opacity=".5"/>
<path d="M309.8 469.7 L326.8 477.1 L301.8 497.6 Z" fill="#b05a20"/>
<path d="M314.8 471.9 L326.8 477.1 L313.8 485.6 Z" fill="#6e3210" opacity=".5"/>
<path d="M326.8 477.1 L302.8 521.1 L295.8 518.1 L301.8 497.6 Z" fill="#bfa57b" opacity=".5"/>
<path d="M332.6 479.6 L349.6 487.0 L324.6 507.5 Z" fill="#b05a20"/>
<path d="M337.6 481.8 L349.6 487.0 L336.6 495.5 Z" fill="#6e3210" opacity=".5"/>
<path d="M349.6 487.0 L325.6 531.0 L318.6 528.0 L324.6 507.5 Z" fill="#bfa57b" opacity=".5"/>
<path d="M355.4 489.6 L372.4 497.0 L347.4 517.5 Z" fill="#b05a20"/>
<path d="M360.4 491.8 L372.4 497.0 L359.4 505.5 Z" fill="#6e3210" opacity=".5"/>
<path d="M372.4 497.0 L348.4 541.0 L341.4 538.0 L347.4 517.5 Z" fill="#bfa57b" opacity=".5"/>
<path d="M378.2 499.6 L395.2 507.0 L370.2 527.5 Z" fill="#b05a20"/>
<path d="M383.2 501.8 L395.2 507.0 L382.2 515.5 Z" fill="#6e3210" opacity=".5"/>
<path d="M395.2 507.0 L371.2 551.0 L364.2 548.0 L370.2 527.5 Z" fill="#bfa57b" opacity=".5"/>
<path d="M401.0 509.5 L418.0 516.9 L393.0 537.4 Z" fill="#b05a20"/>
<path d="M406.0 511.7 L418.0 516.9 L405.0 525.4 Z" fill="#6e3210" opacity=".5"/>
<path d="M418.0 516.9 L394.0 560.9 L387.0 557.9 L393.0 537.4 Z" fill="#bfa57b" opacity=".5"/>
<path d="M423.8 519.5 L440.8 526.9 L415.8 547.4 Z" fill="#b05a20"/>
<path d="M428.8 521.7 L440.8 526.9 L427.8 535.4 Z" fill="#6e3210" opacity=".5"/>
<path d="M440.8 526.9 L416.8 570.9 L409.8 567.9 L415.8 547.4 Z" fill="#bfa57b" opacity=".5"/>
<path d="M446.6 529.5 L463.6 536.9 L438.6 557.4 Z" fill="#b05a20"/>
<path d="M451.6 531.7 L463.6 536.9 L450.6 545.4 Z" fill="#6e3210" opacity=".5"/>
<path d="M463.6 536.9 L439.6 580.9 L432.6 577.9 L438.6 557.4 Z" fill="#bfa57b" opacity=".5"/>
<path d="M469.4 539.4 L486.4 546.8 L461.4 567.3 Z" fill="#b05a20"/>
<path d="M474.4 541.6 L486.4 546.8 L473.4 555.3 Z" fill="#6e3210" opacity=".5"/>
<path d="M486.4 546.8 L462.4 590.8 L455.4 587.8 L461.4 567.3 Z" fill="#bfa57b" opacity=".5"/>
<path d="M492.2 549.4 L509.2 556.8 L484.2 577.3 Z" fill="#b05a20"/>
<path d="M497.2 551.6 L509.2 556.8 L496.2 565.3 Z" fill="#6e3210" opacity=".5"/>
<path d="M509.2 556.8 L485.2 600.8 L478.2 597.8 L484.2 577.3 Z" fill="#bfa57b" opacity=".5"/>
<path d="M515.0 559.4 L532.0 566.8 L507.0 587.3 Z" fill="#b05a20"/>
<path d="M520.0 561.6 L532.0 566.8 L519.0 575.3 Z" fill="#6e3210" opacity=".5"/>
<path d="M532.0 566.8 L508.0 610.8 L501.0 607.8 L507.0 587.3 Z" fill="#bfa57b" opacity=".5"/>
<path d="M537.8 569.3 L554.8 576.7 L529.8 597.2 Z" fill="#b05a20"/>
<path d="M542.8 571.5 L554.8 576.7 L541.8 585.2 Z" fill="#6e3210" opacity=".5"/>
<path d="M554.8 576.7 L530.8 620.7 L523.8 617.7 L529.8 597.2 Z" fill="#bfa57b" opacity=".5"/>
<path d="M560.6 579.3 L577.6 586.7 L552.6 607.2 Z" fill="#b05a20"/>
<path d="M565.6 581.5 L577.6 586.7 L564.6 595.2 Z" fill="#6e3210" opacity=".5"/>
<path d="M577.6 586.7 L553.6 630.7 L546.6 627.7 L552.6 607.2 Z" fill="#bfa57b" opacity=".5"/>
<path d="M302.0 458.3 L552.0 567.5 L552.0 576.0 L302.0 466.8 Z" fill="#efe0bf"/>
<path d="M302.0 461.8 L552.0 571.0 L552.0 572.5 L302.0 463.3 Z" fill="#c9b48c" opacity=".7"/>
<path d="M380 181 L560 120 L560 237 L475 262.500 Z" fill="url(#gpageR)"/>
<path d="M416 183 L560 140 L560 203 L470 229 Z" fill="#1b1511"/>
<path d="M470 196 L560 172 L560 198 L490 216 Z" fill="#5a4236" opacity=".55" filter="url(#bl3)"/>
<path d="M515 196 L552 186 L552 200 L522 208 Z" fill="#b49a84" opacity=".55" filter="url(#bl3)"/>
<path d="M470 229 L560 203 L560 234 L476 260 Z" fill="#d4ccb2"/>
<path d="M470 229 L560 203 L560 212 L473 238 Z" fill="#c2b89c" opacity=".7"/>
<path d="M475 262.500 L560 236 L560 240 L478 266 Z" fill="#efe9d8"/>
<path d="M478 266 L560 240 L560 243 L480 269 Z" fill="#8e8470"/>
<path d="M302 196 L384 183 L475 262.500 L449 262.500 L411 273 L302 321.500 Z" fill="url(#gpageL)"/>
<path d="M302 320 L411 272 L449 262 L475 262 L466 271 L357.500 352 L302 326.500 Z" fill="url(#gpageL2)"/>
<path d="M330 311 L411 274 L449 264 L474 263.500 L452 270 L410 283 L340 316 Z" fill="#55534f" opacity=".55" filter="url(#bl1)"/>
<path d="M302 321.500 L411 273 L449 262.500 L475 262.500" stroke="#e9e7e1" stroke-width="1.200" fill="none"/>
<path d="M302 327 L357.500 352.500 L466 272" stroke="#f1efe9" stroke-width="1.600" fill="none"/>
<path d="M340 300 L366 289 M343 305 L362 297 M346 310 L358 305 M304 278 L326 270 M304 283 L318 278" stroke="#6d6b66" stroke-width="1" opacity=".55"/>
<path d="M302 333 L357 358 L470 275 L478 270 L560 244 L560 254 L482 282 L366 368 L302 343 Z" fill="#1a0c08" opacity=".4" filter="url(#bl3)"/>
<rect x="302" y="105" width="760" height="150" fill="url(#gtop)"/>
<ellipse cx="325" cy="150" rx="120" ry="78" fill="#000" opacity=".9" filter="url(#bl8)"/>
<ellipse cx="520" cy="120" rx="160" ry="60" fill="#000" opacity=".9" filter="url(#bl8)"/>
<rect x="302" y="106" width="60" height="617" fill="url(#gvl)"/>
<rect x="302" y="690" width="760" height="33" fill="url(#gvb)"/>
</g>
<rect x="300" y="106" width="3" height="617" fill="#000" opacity=".5"/>
<clipPath id="ctas"><path d="M746 782 L854 782 L852 790 L832 827 L825 828 L800 812 L770 797 L746 785 Z"/></clipPath>
<path d="M746 782 L854 782 L852 790 L832 827 L825 828 L800 812 L770 797 L746 785 Z" fill="#c9ae84"/>
<g clip-path="url(#ctas)">
<path d="M742 780 L768 832" stroke="#8c6d45" stroke-width="2.200" opacity=".75"/>
<path d="M750 780 L776 832" stroke="#efe0c0" stroke-width="2.200" opacity=".75"/>
<path d="M758 780 L784 832" stroke="#a58558" stroke-width="2.200" opacity=".75"/>
<path d="M766 780 L792 832" stroke="#e2cfa6" stroke-width="2.200" opacity=".75"/>
<path d="M774 780 L800 832" stroke="#8c6d45" stroke-width="2.200" opacity=".75"/>
<path d="M782 780 L808 832" stroke="#efe0c0" stroke-width="2.200" opacity=".75"/>
<path d="M790 780 L816 832" stroke="#a58558" stroke-width="2.200" opacity=".75"/>
<path d="M798 780 L824 832" stroke="#e2cfa6" stroke-width="2.200" opacity=".75"/>
<path d="M806 780 L832 832" stroke="#8c6d45" stroke-width="2.200" opacity=".75"/>
<path d="M814 780 L840 832" stroke="#efe0c0" stroke-width="2.200" opacity=".75"/>
<path d="M822 780 L848 832" stroke="#a58558" stroke-width="2.200" opacity=".75"/>
<path d="M830 780 L856 832" stroke="#e2cfa6" stroke-width="2.200" opacity=".75"/>
<path d="M838 780 L864 832" stroke="#8c6d45" stroke-width="2.200" opacity=".75"/>
<path d="M846 780 L872 832" stroke="#efe0c0" stroke-width="2.200" opacity=".75"/>
</g>
<!-- orange banner -->
<g font-family="'Liberation Sans','DejaVu Sans',sans-serif">
<rect x="1040" y="127" width="174" height="99" fill="#e2541a"/>
<rect x="1040" y="137.500" width="157" height="76.500" fill="#fb8b2f"/>
<text x="1183" y="163" font-size="13" font-weight="bold" fill="#4a1c0a" direction="rtl" text-anchor="start" font-family="'Liberation Serif','DejaVu Sans',serif">.:: شركت مهندسی نرم افزار</text>
<text x="1183" y="185" font-size="9" font-weight="bold" fill="#7a3010" direction="rtl" text-anchor="start" font-family="'Liberation Serif','DejaVu Sans',serif">توليد كننده نرم افزارهای مالی و حسابداری</text>
<text x="1183.500" y="201" font-size="11.300" fill="#7a3010" direction="ltr" text-anchor="end">www.everexteam.com</text>
<!-- acorn logo -->
<path d="M1253 111 L1255.500 124" stroke="#8e3a10" stroke-width="2.600" stroke-linecap="round"/>
<rect x="1213.500" y="117" width="83.500" height="84" rx="7" fill="#fff"/>
<rect x="1218" y="121.500" width="74.500" height="78" rx="3" fill="#5c2609"/>
<path d="M1253.500 114 L1255.500 127" stroke="#8e3a10" stroke-width="2.600"/>
<path d="M1229 147 C1228 168 1240 178 1249 181 C1253 182.500 1254 184 1255 185 C1256 184 1257 182.500 1261 181 C1270 178 1282 168 1281.500 147 Z" fill="#e4571b"/>
<path d="M1227.500 143 C1226 131 1240 126 1255 126 C1270 126 1284 131 1282.800 143 C1282.500 149 1277 150 1273 147.500 C1270 151 1264 151 1261 148 C1257 151.500 1251 151.500 1248 148 C1244 151 1239 151 1237 147.500 C1233 150 1228 149 1227.500 143 Z" fill="#9b4211"/>
<g transform="translate(1249 215) rotate(-14) scale(1 1.18)" font-family="'DejaVu Sans',sans-serif" font-weight="bold" font-size="33" text-anchor="middle" direction="rtl" stroke-linejoin="round">
<text x="0" y="11" fill="#8e3210" stroke="#8e3210" stroke-width="16.500">بلوط</text>
<text x="0" y="11" fill="#fff" stroke="#fff" stroke-width="13.500">بلوط</text>
<text x="0" y="11" fill="#8e3210" stroke="#8e3210" stroke-width="8.500">بلوط</text>
<text x="0" y="11" fill="#fff" stroke="#fff" stroke-width="3.800">بلوط</text>
</g>
<!-- carpet logo -->
<g id="swl"><circle cx="0" cy="0" r="11.300" fill="#2c2c2c"/><path d="M-2 -8.500 A8.500 8.500 0 1 1 -8 3" fill="none" stroke="#e4e0d6" stroke-width="3.400" stroke-linecap="round"/><path d="M-8 3 A5 5 0 0 1 -3.500 -3.800 A3.800 3.800 0 0 1 2.500 1" fill="none" stroke="#e4e0d6" stroke-width="2.400" stroke-linecap="round"/><circle cx="-1.500" cy="0.500" r="1.700" fill="#777"/></g>
<g fill="#4c4c4c"><rect x="1124" y="342" width="69" height="9"/><rect x="1124" y="464" width="69" height="9"/><rect x="1093" y="373" width="9" height="69"/><rect x="1215" y="373" width="9" height="69"/></g>
<g fill="none" stroke="#7e7e7e" stroke-width="2.600">
<path d="M1131 346 C1140 330 1150 346 1158 336 C1166 346 1176 330 1185 346"/>
<path d="M1131 469 C1140 485 1150 469 1158 479 C1166 469 1176 485 1185 469"/>
<path d="M1097 380 C1081 389 1097 399 1087 407 C1097 415 1081 425 1097 434"/>
<path d="M1220 380 C1236 389 1220 399 1230 407 C1220 415 1236 425 1220 434"/>
<path d="M1106 333 C1098 326 1094 334 1100 338 M1210 333 C1218 326 1222 334 1216 338 M1106 482 C1098 489 1094 481 1100 477 M1210 482 C1218 489 1222 481 1216 477"/>
<path d="M1083 356 C1076 348 1084 344 1088 350 M1083 458 C1076 466 1084 470 1088 464 M1233 356 C1240 348 1232 344 1228 350 M1233 458 C1240 466 1232 470 1228 464"/>
</g>
<g fill="#c4c4c4" stroke="#4a4a4a" stroke-width=".8">
<path d="M1133 351 L1151 340 L1153 351Z M1183 351 L1165 340 L1163 351Z M1133 464 L1151 475 L1153 464Z M1183 464 L1165 475 L1163 464Z"/>
<path d="M1102 382 L1091 397 L1102 400Z M1102 433 L1091 418 L1102 415Z M1215 382 L1226 397 L1215 400Z M1215 433 L1226 418 L1215 415Z"/>
</g>
<g><use href="#swl" x="1121" y="338"/><use href="#swl" x="1121" y="338" transform="translate(2316 0) scale(-1 1)"/><use href="#swl" x="1121" y="338" transform="translate(0 816) scale(1 -1)"/><use href="#swl" x="1121" y="338" transform="translate(2316 816) scale(-1 -1)"/>
<use href="#swl" x="1087" y="371"/><use href="#swl" x="1087" y="371" transform="translate(2316 0) scale(-1 1)"/><use href="#swl" x="1087" y="371" transform="translate(0 816) scale(1 -1)"/><use href="#swl" x="1087" y="371" transform="translate(2316 816) scale(-1 -1)"/></g>
<g fill="#bdbdbd" stroke="#444" stroke-width=".8"><circle cx="1148" cy="339" r="4"/><circle cx="1168" cy="339" r="4"/><circle cx="1148" cy="477" r="4"/><circle cx="1168" cy="477" r="4"/><circle cx="1089" cy="398" r="4"/><circle cx="1089" cy="418" r="4"/><circle cx="1227" cy="398" r="4"/><circle cx="1227" cy="418" r="4"/></g>
<rect x="1104" y="353" width="109" height="109" fill="#11808c" stroke="#c9c9c9" stroke-width="2.500"/>
<rect x="1102" y="351" width="113" height="113" fill="none" stroke="#5a5a5a" stroke-width="1"/>
<g transform="translate(1158.800 407.500) rotate(-42)">
<ellipse cx="0" cy="0" rx="56" ry="35.500" fill="#f8a81a"/>
<ellipse cx="0" cy="0" rx="53" ry="32.500" fill="#e63c20"/>
</g>
<g transform="translate(1157 409) rotate(-27) scale(.92 1.12)"><text x="0" y="11" font-size="33" font-weight="bold" fill="#fbbc1a" text-anchor="middle" direction="rtl" font-family="'DejaVu Sans',sans-serif">فرش</text></g>
<!-- everex -->
<g transform="translate(1124 654)">
<path d="M18 12 L32 0 L40 14 L28 26Z" fill="#f4e21c"/>
<path d="M34 2 L52 8 L46 22 L40 14Z" fill="#f4e21c"/>
<path d="M50 14 L62 22 L50 40 L42 28Z" fill="#28b48c"/>
<path d="M6 30 L18 12 L28 26 L14 40Z" fill="#f79a1c"/>
<path d="M28 26 L40 14 L50 32 L38 44Z" fill="#f79a1c"/>
<path d="M0 44 L6 30 L14 40 L8 54Z" fill="#28b48c"/>
<path d="M8 54 L14 40 L26 50 L20 64Z" fill="#f4e21c"/>
<path d="M38 44 L50 32 L64 54 L54 68 Z" fill="#f4e21c"/>
<path d="M20 64 L26 50 L38 60 L32 76Z" fill="#f79a1c"/>
<path d="M2 58 L8 54 L20 64 L14 76Z" fill="#28b48c"/>
<path d="M14 76 L20 64 L32 76 L24 86Z" fill="#f4e21c"/>
<path d="M32 66 L42 54 L54 68 L48 84 Z" fill="#28b48c"/>
<path d="M20 12 L24 34 L4 42 L24 44 L20 70 L30 48 L50 62 L36 42 L42 22 L28 34 Z" fill="#000"/>
</g>
<text x="1108" y="753" font-size="12.500" font-weight="bold" fill="#a6e6d6" direction="ltr" textLength="46" lengthAdjust="spacingAndGlyphs" stroke="#a6e6d6" stroke-width=".6">EVEREX</text>
<text x="1159" y="753" font-size="12.500" font-weight="bold" fill="#f79a1c" direction="ltr" textLength="68" lengthAdjust="spacingAndGlyphs" stroke="#f79a1c" stroke-width=".6">SOFTWARE</text>
<text x="1254" y="774" font-size="13.500" font-weight="bold" fill="#5e4e10" direction="rtl" text-anchor="start" font-family="'DejaVu Sans',sans-serif" textLength="174" lengthAdjust="spacingAndGlyphs">محصولات نرم افزاری با نام تجاری اورکس</text>
<text x="1254" y="791" font-size="13.500" font-weight="bold" fill="#5e4e10" direction="rtl" text-anchor="start" font-family="'DejaVu Sans',sans-serif" textLength="174" lengthAdjust="spacingAndGlyphs">شرکت مهندسی صهبا رایـانه تـوس</text>
</g>

</svg>
<!--MDI-E-->
</div>
<!--RIGHT-->
<div id="right" class="a">
<!--RIGHT-S-->
<div class="a" style="left:2px;top:29px;width:277px;height:710px;background:linear-gradient(to bottom,#cbcbcb 0,#c2c2c2 30%,#b0b0b0 65%,#9e9e9e 100%);border:1px solid #5c5c5c;border-top:none;border-radius:0 0 3px 3px;box-sizing:border-box;box-shadow:inset 1px 0 0 #d8d8d8, inset -1px -1px 0 #cfcfcf"></div>
<div class="a" style="left:3px;top:29px;width:275px;height:709px;background-image:repeating-linear-gradient(to bottom,rgba(255,255,255,.10) 0,rgba(255,255,255,.10) 1px,rgba(0,0,0,.03) 1px,rgba(0,0,0,.03) 2px)"></div>
<div class="a" style="left:2px;top:2px;width:277px;height:27px;border:1px solid #5f5f5f;border-radius:4px;box-sizing:border-box;background:linear-gradient(to bottom,#d2d2d2 0,#c6c6c6 45%,#a9a9a9 52%,#b6b6b6 80%,#c4c4c4 100%);box-shadow:inset 0 0 0 1px rgba(255,255,255,.4)"><span class="t" style="left:6px;width:275px;text-align:center;top:6px;font-size:11px">فاكتورهاي (فروش) اخير</span></div>
<!--RIGHT-E-->
</div>
<!--DIALOG-->
<div id="dlg" class="a">
<!--DLG-S-->
<!-- "window behind" side handles -->
<div class="a" style="left:-6px;top:141px;width:8px;height:384px;background:linear-gradient(to right,#8a8a8a 0,#cfcfcf 1px,#c4c4c4 2px,#6a6a6a 3px,#cdcdcd 4px,#c9c9c9 6px,#777 7px);border-radius:3px 0 0 3px"></div>
<div class="a" style="left:496px;top:140px;width:3px;height:386px;background:linear-gradient(to right,#6a6a6a,#c9c9c9 35%,#c0c0c0 75%,#777);border-radius:0 3px 2px 0"></div>
<!-- outer frame -->
<div class="a" style="left:0;top:0;width:495px;height:665px;box-sizing:border-box;border:1px solid #909090;border-radius:7px 7px 1px 1px;background:#b3b7b6;box-shadow:inset 0 0 0 2.500px #d4d4d4"></div>
<div class="a" style="left:3px;top:26px;width:489px;height:370px;box-sizing:border-box;border-left:1px solid #5a5a5a;border-right:1px solid #5a5a5a"></div>
<!-- title -->
<div class="a" style="left:1px;top:1px;width:493px;height:25px;border-radius:6px 6px 0 0;background:linear-gradient(to bottom,#bdbdbd 0,#a4a4a4 2px,#9f9f9f 9px,#8c8c8c 11px,#6a6a6a 13px,#6d6d6d 17px,#8a8a8a 23px,#444 24px,#444 25px)"></div>
<span class="t" style="right:43px;top:5px;font-size:13px;font-weight:bold;color:#fff;line-height:16px;height:16px;text-shadow:0 0 1px #dde">حـــســـابــدار</span>
<svg class="a" style="left:455px;top:4px" width="38" height="19" viewBox="0 0 38 19">
<defs><radialGradient id="rb" cx=".4" cy=".35" r=".7"><stop offset="0" stop-color="#b0b0b0"/><stop offset=".7" stop-color="#8e8e8e"/><stop offset="1" stop-color="#707070"/></radialGradient></defs>
<circle cx="9" cy="9.500" r="8" fill="url(#rb)" stroke="#484848" stroke-width="1.400"/><circle cx="9" cy="9.500" r="7" fill="none" stroke="#c4c4c4" stroke-width=".8" opacity=".7"/>
<circle cx="28" cy="9.500" r="8" fill="url(#rb)" stroke="#484848" stroke-width="1.400"/><circle cx="28" cy="9.500" r="7" fill="none" stroke="#c4c4c4" stroke-width=".8" opacity=".7"/>
<rect x="5" y="11.500" width="7" height="1.800" fill="#6e6e6e"/>
<path d="M24.500 6 L31.500 13 M31.500 6 L24.500 13" stroke="#6e6e6e" stroke-width="2.200"/>
</svg>
<!-- toolbar -->
<div class="a" style="left:3px;top:26px;width:489px;height:48px;box-sizing:border-box;border-radius:3px;border-left:1px solid #d2d2d2;border-top:1px solid #c6c6c6;border-right:1px solid #dadada;border-bottom:1px solid #4a4a4a;background:linear-gradient(to bottom,#b6b6b6 0,#aeaeae 18px,#a4a4a4 22px,#7c7c7c 24px,#7e7e7e 27px,#9a9a9a 40px,#aaaaaa 47px)"></div>
<!-- save -->
<svg class="a" style="left:16px;top:39px" width="16" height="16" viewBox="0 0 16 16"><path d="M.500 .500 H13.500 L15.500 2.500 V15.500 H.500Z" fill="#9a9af2" stroke="#5a5ad6" stroke-width="1"/><rect x="3" y="1" width="8" height="4.500" fill="#e0e0fa"/><rect x="8" y="1.500" width="2" height="3.500" fill="#5a5ad6"/><rect x="2.500" y="8" width="11" height="7" fill="#f4f4fb"/><path d="M3.500 10 H12.500 M3.500 12 H12.500 M3.500 14 H12.500" stroke="#b0b0d0" stroke-width=".8"/></svg>
<!-- trash -->
<svg class="a" style="left:58px;top:39px" width="14" height="16" viewBox="0 0 14 16"><rect x="5" y="0" width="4" height="1.500" fill="#d6d6e6"/><rect x=".500" y="2" width="13" height="2.200" fill="#d2d4e8" stroke="#aeb2cc" stroke-width=".6"/><path d="M1.500 5 H12.500 V15.500 H1.500Z" fill="#cfd2e6" stroke="#aeb2cc" stroke-width=".8"/><path d="M4.500 6 V14.500 M7 6 V14.500 M9.500 6 V14.500" stroke="#9a9eb8" stroke-width="1.300"/></svg>
<!-- printer -->
<svg class="a" style="left:99px;top:39px" width="15" height="16" viewBox="0 0 15 16"><path d="M3 0 H8 L9.500 6 H2Z" fill="#f6f6f6" stroke="#777" stroke-width=".5"/><ellipse cx="7.500" cy="9.500" rx="7" ry="4.500" fill="#3a7ee0"/><path d="M0 10 H15 V14 H0Z" fill="#0a0a0a"/><path d="M4 6.500 L11 6 L10 10 L5 10.500Z" fill="#f5a21a"/><rect x="6" y="7" width="3" height="1.500" fill="#111"/><path d="M5 11 L13 11.500 L12 15 L6 14.500Z" fill="#d0e8f8"/><path d="M6 13 L12 13.500" stroke="#e060a0" stroke-width=".8"/></svg>
<!-- magnifier -->
<svg class="a" style="left:139px;top:38px" width="17" height="18" viewBox="0 0 17 18"><circle cx="7" cy="7" r="5.800" fill="#b6e0f8" stroke="#c8c8c8" stroke-width="2"/><circle cx="7" cy="7" r="6.800" fill="none" stroke="#8e8e8e" stroke-width=".5"/><circle cx="5.500" cy="5.500" r="2.500" fill="#e8f6ff" opacity=".7"/><path d="M11.500 11.500 L15 15" stroke="#f5a21a" stroke-width="3.200" stroke-linecap="round"/><circle cx="14.300" cy="8" r=".7" fill="#e8e8e8"/></svg>
<!-- window plus -->
<svg class="a" style="left:180px;top:39px" width="17" height="17" viewBox="0 0 17 17"><rect x=".500" y=".500" width="15" height="13" fill="#e4e8f8" stroke="#c0c6e0" stroke-width=".8"/><rect x="0" y="0" width="16" height="3.500" fill="#3a5ed0"/><rect x="0" y="3.500" width="16" height="1" fill="#7a96e8"/><path d="M7.500 10.500 H10.500 V7.500 H13.500 V10.500 H16.500 V13.500 H13.500 V16.500 H10.500 V13.500 H7.500Z" fill="#3fc83a" stroke="#9ce69a" stroke-width=".6"/></svg>
<!-- door arrow -->
<svg class="a" style="left:221px;top:39px" width="16" height="16" viewBox="0 0 16 16"><path d="M6 2 L10 1 L10 14 L6 12.500Z" fill="#dce6f6"/><path d="M9 2.500 L15 .500 V13 L9 15.500Z" fill="#8a8ad0" stroke="#6a6ab8" stroke-width=".6"/><rect x="12.300" y="3.500" width="1.600" height="1.200" fill="#d0d0f0"/><path d="M0 6.500 H4.500 V3.500 L9 8 L4.500 12.500 V9.500 H0Z" fill="#2fb82a" stroke="#1a8a18" stroke-width=".6"/></svg>

<!-- tab strip + page background (striped) -->
<div class="a stripe" style="left:3px;top:75px;width:489px;height:320px"></div>
<!-- tabs -->
<div class="a" style="left:114px;top:78px;width:83px;height:19px;box-sizing:border-box;border:1px solid #5e5e5e;border-bottom:none;border-radius:3px 3px 0 0;box-shadow:inset 1px 1px 0 #d9d9d9, inset -1px 0 0 #c4c4c4;background:linear-gradient(to bottom,#b5b5b5,#a5a5a5)"></div>
<span class="t" style="left:114px;width:83px;text-align:center;top:82px;font-size:11.5px;color:#111">اعضاي حسابدار</span>
<div class="a" style="left:74px;top:78px;width:39px;height:19px;box-sizing:border-box;border:1px solid #5e5e5e;border-bottom:none;border-radius:3px 3px 0 0;box-shadow:inset 1px 1px 0 #d9d9d9, inset -1px 0 0 #c4c4c4;background:linear-gradient(to bottom,#b5b5b5,#a5a5a5)"></div>
<span class="t" style="left:74px;width:39px;text-align:center;top:82px;font-size:11.5px;color:#111">اجناس</span>
<div class="a" style="left:4px;top:76px;width:69px;height:22px;box-sizing:border-box;border:1px solid #6a6a6a;border-bottom:none;border-radius:4px 4px 0 0;box-shadow:inset 1px 1px 0 #fff;background:linear-gradient(to bottom,#ffffff 0,#ececec 35%,#d6d6d6 50%,#e4e4e4 70%,#ebebeb 100%)"></div>
<span class="t" style="left:4px;width:69px;text-align:center;top:79px;font-size:11.5px;color:#111">حسابرسي</span>
<!-- tab page -->
<div class="a" style="left:4px;top:97px;width:487px;height:299px;box-sizing:border-box;border:2px solid #cfcfcf;border-radius:6px"></div>
<div class="a" style="left:6px;top:98px;width:484px;height:296px;box-sizing:border-box;border:1.500px solid #262626;border-radius:5px;box-shadow:inset 1px 1px 0 #b9b9b9, inset -1px -1px 0 #b9b9b9"></div>
<!-- list label + listbox -->
<span class="t" style="right:17px;top:116px;font-size:11.5px">اسامي كل اعضاء :</span>
<div class="a" style="left:327px;top:132px;width:152px;height:247px;background:#fff;border:1px solid #e4e4e4;box-sizing:border-box"></div>
<!-- groupbox 1 -->
<div class="gb" style="left:23px;top:131px;width:296px;height:47px"></div>
<span class="gbl stripe" style="right:187px;top:125px">كل موجودي صندوق حسابداري</span>
<span class="t" style="left:165px;top:152px;font-weight:bold;font-size:15px">۰</span>
<!-- groupbox 2 -->
<div class="gb" style="left:23px;top:187px;width:296px;height:87px"></div>
<span class="gbl stripe" style="right:187px;top:181px">وضعيت</span>
<span class="t b" style="right:180px;top:207px;font-size:11.5px;transform-origin:right;transform:scaleX(.863)">بستانكاري:</span>
<span class="t b" style="right:180px;top:240px;font-size:11.5px;transform-origin:right;transform:scaleX(.865)">بدهكاري:</span>
<span class="t b" style="left:142px;top:208px;color:#0a8a1a;font-size:15px">۰</span>
<span class="t b" style="left:142px;top:240px;color:#e01010;font-size:15px">۰</span>
<!-- groupbox 3 -->
<div class="gb" style="left:23px;top:283px;width:296px;height:96px"></div>
<span class="gbl stripe" style="right:181px;top:277px">واريز و برداشت از حساب شخص</span>
<span class="t b" style="right:214px;top:296px;font-size:11.5px;transform-origin:right;transform:scaleX(.74)">واريز به</span>
<span class="t b" style="right:180px;top:308px;font-size:11.5px;transform-origin:right;transform:scaleX(.854)">صندوق حسابداري</span>
<span class="t b" style="right:207px;top:335px;font-size:11.5px;transform-origin:right;transform:scaleX(.8)">برداشت از</span>
<span class="t b" style="right:180px;top:348px;font-size:11.5px;transform-origin:right;transform:scaleX(.854)">صندوق حسابداري</span>
<div class="a" style="left:87px;top:294px;width:137px;height:30px;background:#fff;box-sizing:border-box;border:1px solid #dcdcdc"><span class="t b" style="right:4px;top:9px;font-size:15px">۰</span></div>
<div class="a" style="left:87px;top:334px;width:137px;height:30px;background:#fff;box-sizing:border-box;border:1px solid #dcdcdc"><span class="t b" style="right:4px;top:9px;font-size:15px">۰</span></div>
<div class="btn" style="left:31px;top:299px;width:49px;height:25px;line-height:23px;font-size:11.5px">قبول</div>
<div class="btn" style="left:31px;top:339px;width:49px;height:25px;line-height:23px;font-size:11.5px">قبول</div>
<!-- result strip -->
<div class="a" style="left:4px;top:401px;width:487px;height:1px;background:#dcdcdc"></div>
<span class="t" style="right:10px;top:396px;font-size:11px">نتيجه: ۰</span>
<!-- grid -->
<div class="grid" style="left:6px;top:411px;width:485px;height:249px;border:1px solid #7a9cc4"></div>
<div class="gh" style="left:14px;top:413px;width:476px;height:21px">
<span class="t" style="left:426px;width:50px;text-align:center;top:3px">ركورد</span>
<span class="t" style="left:316px;width:110px;text-align:center;top:3px">نام خريدار</span>
<span class="t" style="left:195px;width:121px;text-align:center;top:3px">نام كالا</span>
<span class="t" style="left:117px;width:78px;text-align:center;top:3px">تاريخ خريد</span>
<span class="t" style="left:0;width:117px;text-align:center;top:3px">مبلغ كالا</span>
</div>
<div class="sel" style="left:14px;top:434px;width:476px;height:21px"></div>
<div class="vl" style="left:14px;top:413px;height:21px"></div>
<div class="vl" style="left:131px;top:413px;height:42px"></div>
<div class="vl" style="left:208px;top:413px;height:42px"></div>
<div class="vl" style="left:330px;top:413px;height:42px"></div>
<div class="vl" style="left:439px;top:413px;height:42px"></div>
<!--DLG-E-->
</div>
<!--STATUS-->
<div id="status" class="a">
<svg class="a" style="left:1582px;top:9px" width="16" height="16" viewBox="0 0 16 16"><g fill="#e6e6e6"><rect x="12" y="0" width="2" height="2"/><rect x="8" y="4" width="2" height="2"/><rect x="12" y="4" width="2" height="2"/><rect x="4" y="8" width="2" height="2"/><rect x="8" y="8" width="2" height="2"/><rect x="12" y="8" width="2" height="2"/><rect x="0" y="12" width="2" height="2"/><rect x="4" y="12" width="2" height="2"/><rect x="8" y="12" width="2" height="2"/><rect x="12" y="12" width="2" height="2"/></g><g fill="#707070"><rect x="13" y="1" width="2" height="2"/><rect x="9" y="5" width="2" height="2"/><rect x="13" y="5" width="2" height="2"/><rect x="5" y="9" width="2" height="2"/><rect x="9" y="9" width="2" height="2"/><rect x="13" y="9" width="2" height="2"/><rect x="1" y="13" width="2" height="2"/><rect x="5" y="13" width="2" height="2"/><rect x="9" y="13" width="2" height="2"/><rect x="13" y="13" width="2" height="2"/></g></svg>
<span class="t" style="right:24px">كاربر:  مديريت  خوش آمديد</span>
<span class="sp" style="left:680px"></span>
<span class="sp" style="left:469px"></span>
<span class="t" style="left:340px;transform-origin:left;transform:scaleX(.907)">تاريخ ميلادي: ۲۵/۱۱/۲۰۲۱</span>
<span class="sp" style="left:318px"></span>
<span class="t" style="left:174px;transform-origin:left;transform:scaleX(.917)">امروز: پنج شنبه ۴ آذر ۱۴۰۰</span>
<span class="sp" style="left:147px"></span>
<span class="t" style="left:14px;transform-origin:left;transform:scaleX(.868)">ساعت ورود: ۱۰:۱۷:۱۶ ق.ظ</span>
</div>
<div id="task" class="a">
<!--TASK-S-->
<div class="a" style="left:0;top:0;width:201px;height:40px;background:#24333a"></div>
<svg class="a" style="left:0;top:0" width="200" height="40" viewBox="0 0 200 40">
<path d="M16 14.200 L22.500 13.300 V19.500 H16Z M23.500 13.150 L32 12 V19.500 H23.500Z M16 20.500 H22.500 V26.700 L16 25.800Z M23.500 20.500 H32 V28 L23.500 26.850Z" fill="#fff"/>
<circle cx="74.500" cy="17.500" r="5.300" fill="none" stroke="#fff" stroke-width="1.600"/><path d="M70.800 21.500 L64.500 27.800" stroke="#fff" stroke-width="1.800"/>
<circle cx="120" cy="20" r="6.800" fill="none" stroke="#fff" stroke-width="2"/>
<path d="M160.500 14 V26 M163 15 H172 V25 H163Z M175.500 14 V17 M175.500 19 V26 M160 12.500 H164 M160 27.500 H164 M171 12.500 H176 M171 27.500 H176" fill="none" stroke="#fff" stroke-width="1.300"/>
</svg>
<!--TASK-E-->
</div>
</body>
</html>
